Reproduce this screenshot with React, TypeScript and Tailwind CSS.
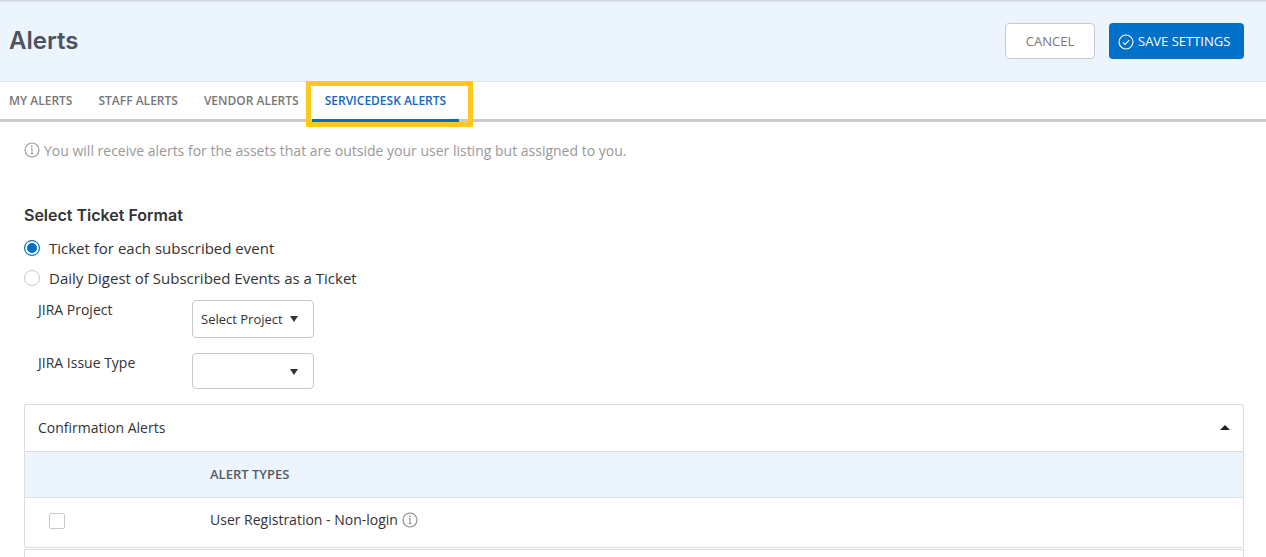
import { useState } from 'react';

const TABS = ['MY ALERTS', 'STAFF ALERTS', 'VENDOR ALERTS', 'SERVICEDESK ALERTS'];

const FORMATS = [
    { id: 'event', label: 'Ticket for each subscribed event' },
    { id: 'digest', label: 'Daily Digest of Subscribed Events as a Ticket' },
];

function InfoIcon({ className = '' }: { className?: string }) {
    return (
        <svg viewBox="0 0 16 16" className={`size-4 shrink-0 ${className}`} fill="none" stroke="currentColor" aria-hidden="true">
            <circle cx="8" cy="8" r="7" strokeWidth="1.1" />
            <path d="M7 6.5h1v5M6.8 11.5h2.4" />
            <circle cx="7.8" cy="4.3" r="0.9" fill="currentColor" stroke="none" />
        </svg>
    );
}

function CheckIcon() {
    return (
        <svg viewBox="0 0 16 16" className="mt-0.5 size-4 shrink-0" fill="none" stroke="currentColor" aria-hidden="true">
            <circle cx="8" cy="8" r="7" strokeWidth="1.1" />
            <path d="M4.8 8.3l2.2 2.1 4.2-4.3" strokeWidth="1.1" />
        </svg>
    );
}

function SelectField({ id, label, options, className }: { id: string; label: string; options: string[]; className: string }) {
    return (
        <div className="flex items-start">
            <label htmlFor={id} className="w-[154px] shrink-0">{label}</label>
            <div className="relative">
                <select id={id} className={`w-[122px] appearance-none rounded border border-[#c8c8c8] bg-white pl-2 pr-6 text-[13px] ${className}`}>
                    {options.map(option => (
                        <option key={option}>{option}</option>
                    ))}
                </select>
                <svg viewBox="0 0 8 6" className="pointer-events-none absolute right-4 top-4 h-1.5 w-2" fill="#333" aria-hidden="true">
                    <path d="M0 0h8L4 6z" />
                </svg>
            </div>
        </div>
    );
}

export default function App() {
    const [activeTab, setActiveTab] = useState('SERVICEDESK ALERTS');
    const [format, setFormat] = useState('event');
    const [open, setOpen] = useState(true);
    const [registration, setRegistration] = useState(false);

    return (
        <div className="overflow-hidden bg-white font-['Open_Sans',sans-serif] text-[14px] leading-5 text-[#333]">
            <header className="flex h-[82px] items-center justify-between border-b border-[#dde5ed] bg-[#ecf4fe] pl-[9px] pr-[22px] shadow-[inset_0_1px_0_#cfd6e0,inset_0_5px_4px_-4px_#cfd6e0]">
                <h1 className="font-['Inter',sans-serif] text-[24px] font-semibold text-[#4b535d]">Alerts</h1>
                <div className="flex gap-3.5 text-[13px]">
                    <button type="button" className="h-9 w-[90px] rounded border border-[#c8c8c8] bg-white text-[#777]">CANCEL</button>
                    <button type="button" className="flex h-9 w-[135px] items-center gap-1 whitespace-nowrap rounded bg-[#0070c9] pl-[9px] text-white">
                        <CheckIcon />
                        SAVE SETTINGS
                    </button>
                </div>
            </header>

            {/* Tabs */}
            <nav className="flex h-10 border-b-3 border-[#cbcbcb] text-[12px] font-semibold">
                {TABS.map(tab => (
                    <button
                        key={tab}
                        type="button"
                        onClick={() => setActiveTab(tab)}
                        className={`relative -mb-[3px] h-10 whitespace-nowrap border-b-3 px-[13px] first:pl-[9px] ${tab === activeTab ? 'border-[#0070c9] text-[#1268c4]' : 'border-transparent text-[#777]'}`}
                    >
                        {tab}
                        {tab === activeTab && (
                            <span className="pointer-events-none absolute -left-1.5 -right-3.5 -top-px h-[46px] border-5 border-[#ffc91b]" />
                        )}
                    </button>
                ))}
            </nav>

            <main className="pl-6 pr-[22px]">
                <p className="mt-[19px] flex items-center gap-1 text-[#999]">
                    <InfoIcon className="-mt-0.5" />
                    You will receive alerts for the assets that are outside your user listing but assigned to you.
                </p>

                <h2 className="mt-11 font-['Inter',sans-serif] text-[16px] font-semibold leading-5">Select Ticket Format</h2>
                <div className="mt-[13px] flex flex-col gap-2.5 text-[15px]">
                    {FORMATS.map(f => (
                        <label key={f.id} className="flex items-center gap-[9px] leading-5">
                            <input
                                type="radio"
                                name="format"
                                checked={format === f.id}
                                onChange={() => setFormat(f.id)}
                                className="size-4 appearance-none rounded-full border border-[#c8c8c8] bg-white checked:border-[#0070c9] checked:bg-[#0070c9] checked:shadow-[inset_0_0_0_2px_#fff]"
                            />
                            {f.label}
                        </label>
                    ))}
                </div>

                <div className="mt-3 flex flex-col gap-[15px] pl-3.5">
                    <SelectField id="project" label="JIRA Project" options={['Select Project']} className="h-[38px]" />
                    <SelectField id="issue" label="JIRA Issue Type" options={['']} className="h-9" />
                </div>

                {/* Confirmation alerts */}
                <section className="mt-[15px] rounded-xs border border-[#dcdcdf]">
                    <button type="button" onClick={() => setOpen(!open)} aria-expanded={open} className="flex h-[46px] w-full items-center justify-between px-[13px]">
                        Confirmation Alerts
                        <svg viewBox="0 0 10 5" className={`mb-0.5 h-[5px] w-2.5 ${open ? '' : 'rotate-180'}`} fill="#222" aria-hidden="true">
                            <path d="M5 0l5 5H0z" />
                        </svg>
                    </button>
                    {open && (
                        <table className="w-full table-fixed border-t border-[#dcdcdf] text-left">
                            <thead className="border-b border-[#d9e2ec] bg-[#ecf4fe]">
                                <tr className="h-[46px]">
                                    <th className="w-[185px]" aria-label="Subscribed" />
                                    <th className="pb-0.5 text-[13px] font-semibold text-[#555b64]">ALERT TYPES</th>
                                </tr>
                            </thead>
                            <tbody>
                                <tr className="h-[49px]">
                                    <td className="pb-0.5 pl-6">
                                        <input
                                            type="checkbox"
                                            aria-label="User Registration - Non-login"
                                            checked={registration}
                                            onChange={e => setRegistration(e.target.checked)}
                                            className="block size-4 appearance-none rounded-xs border border-[#c8c8c8] bg-white checked:bg-[#0070c9]"
                                        />
                                    </td>
                                    <td>
                                        <span className="flex items-center gap-1 pb-1">
                                            User Registration - Non-login
                                            <InfoIcon className="text-[#888]" />
                                        </span>
                                    </td>
                                </tr>
                            </tbody>
                        </table>
                    )}
                </section>
                <section className="mt-px h-2 border-x border-t border-[#dcdcdf]" />
            </main>
        </div>
    );
}
